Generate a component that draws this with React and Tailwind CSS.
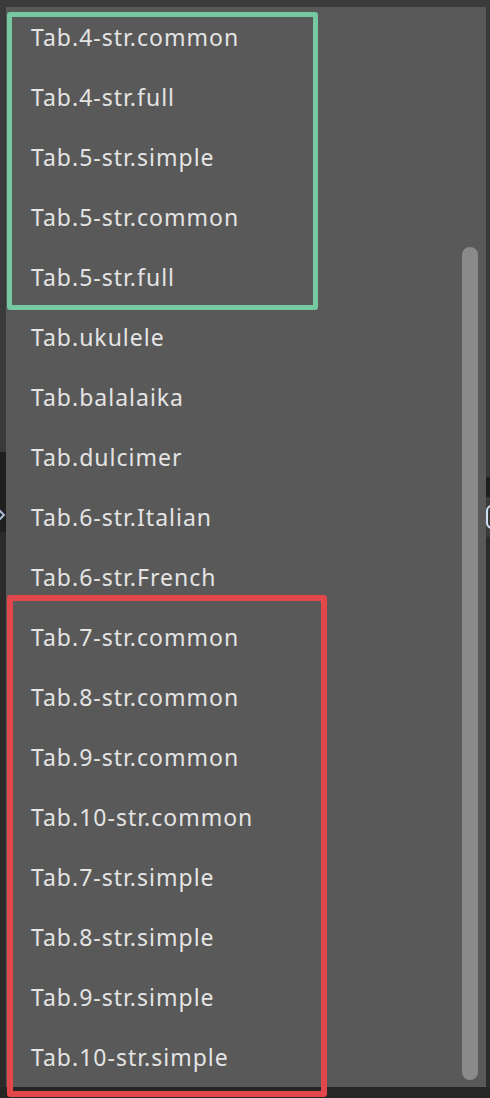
const ITEMS = [
  'Tab.4-str.common',
  'Tab.4-str.full',
  'Tab.5-str.simple',
  'Tab.5-str.common',
  'Tab.5-str.full',
  'Tab.ukulele',
  'Tab.balalaika',
  'Tab.dulcimer',
  'Tab.6-str.Italian',
  'Tab.6-str.French',
  'Tab.7-str.common',
  'Tab.8-str.common',
  'Tab.9-str.common',
  'Tab.10-str.common',
  'Tab.7-str.simple',
  'Tab.8-str.simple',
  'Tab.9-str.simple',
  'Tab.10-str.simple',
];

export default function App() {
  return (
    <div
      className="relative w-[490px] h-[1098px] overflow-hidden bg-[#262626] flex flex-col"
      style={{ fontFamily: '"Noto Sans", "Open Sans", sans-serif' }}
    >
      <div className="h-[7px] bg-[#3b3b3b]" />
      <div className="flex">
        {/* background window peeking out on the left */}
        <div className="w-[6px] flex flex-col">
          <div className="h-[445px] bg-[#3a3a3a]" />
          <div className="h-[80px] bg-[#1f1f1f] relative overflow-hidden">
            <svg className="absolute -left-[4px] top-[56px]" width="10" height="14" viewBox="0 0 10 14">
              <path d="M3 2 L8 7 L3 12" fill="none" stroke="#a9bcd9" strokeWidth="2" />
            </svg>
          </div>
          <div className="flex-1 bg-[#2b2b2b]" />
        </div>

        {/* dropdown list */}
        <div className="relative w-[480px] h-[1080px] bg-[#595959]">
          <ul className="flex flex-col">
            {ITEMS.map((name) => (
              <li
                key={name}
                className="h-[60px] flex items-center pl-[25px] pt-[1px] text-[23px] tracking-[1px] text-[#e4e4e4] leading-none"
              >
                {name}
              </li>
            ))}
          </ul>
          <div className="absolute right-[8px] top-[240px] w-[16px] h-[833px] rounded-full bg-[#8a8a8a]" />
        </div>

        {/* background window peeking out on the right */}
        <div className="w-[4px] flex flex-col">
          <div className="h-[470px] bg-[#3a3a3a]" />
          <div className="h-[20px] bg-[#1f1f1f]" />
          <div className="h-[40px] bg-[#3a3a3a] relative overflow-hidden">
            <span className="absolute left-0 top-[8px] w-[6px] h-[24px] rounded-l-full border-2 border-[#cfe0f5]" />
          </div>
          <div className="flex-1 bg-[#2b2b2b]" />
        </div>
      </div>

      {/* annotation boxes */}
      <div className="absolute left-[7px] top-[12px] w-[311px] h-[298px] border-[5px] border-[#76c8a0] rounded-[3px]" />
      <div className="absolute left-[7px] top-[595px] w-[320px] h-[502px] border-[6px] border-[#e2474b] rounded-[3px]" />
    </div>
  );
}
